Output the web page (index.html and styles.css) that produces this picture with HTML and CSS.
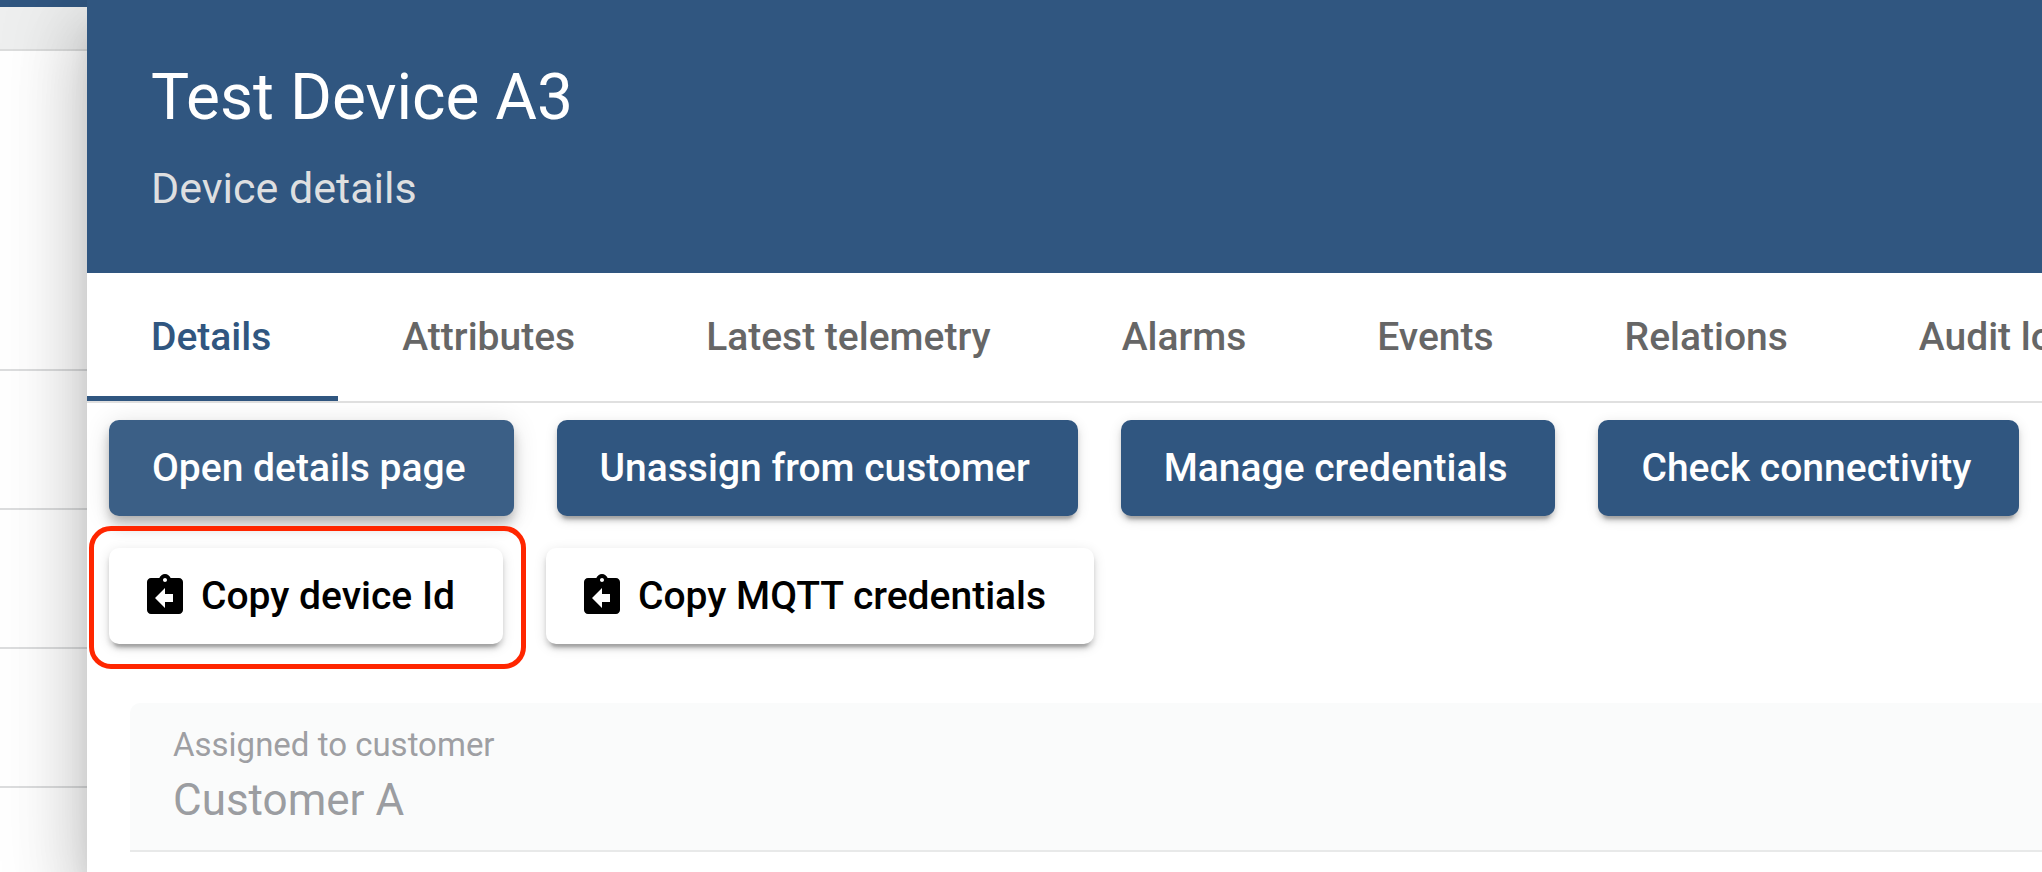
FILE: index.html
```html
<!DOCTYPE html>
<html lang="en">
<head>
<meta charset="utf-8">
<title>Test Device A3</title>
<link rel="stylesheet" href="styles.css">
</head>
<body>
<svg class="sprite" aria-hidden="true">
  <symbol id="assignment-return" viewBox="0 0 24 24">
    <path d="M19 3h-4.180C14.400 1.840 13.300 1 12 1c-1.300 0-2.400.840-2.820 2H5c-1.100 0-2 .900-2 2v14c0 1.100.900 2 2 2h14c1.100 0 2-.900 2-2V5c0-1.100-.900-2-2-2zm-7 0c.550 0 1 .450 1 1s-.450 1-1 1-1-.450-1-1 .450-1 1-1zm4 12h-4v3l-5-5 5-5v3h4v4z"/>
  </symbol>
</svg>
<div class="app">
  <aside class="backdrop">
    <div class="backdrop-bar"></div>
    <div class="backdrop-head"></div>
    <div class="backdrop-row backdrop-row-first"></div>
    <div class="backdrop-row"></div>
    <div class="backdrop-row"></div>
    <div class="backdrop-row"></div>
    <div class="backdrop-rest"></div>
  </aside>
  <main class="panel">
    <header class="panel-header">
      <h1 class="title">Test Device A3</h1>
      <p class="subtitle">Device details</p>
    </header>
    <nav class="tabs" role="tablist">
      <button class="tab tab-active" role="tab" aria-selected="true">Details</button>
      <button class="tab" role="tab">Attributes</button>
      <button class="tab" role="tab">Latest telemetry</button>
      <button class="tab" role="tab">Alarms</button>
      <button class="tab" role="tab">Events</button>
      <button class="tab" role="tab">Relations</button>
      <button class="tab" role="tab">Audit logs</button>
    </nav>
    <section class="actions">
      <div class="action-row">
        <button class="btn btn-primary btn-hovered">Open details page</button>
        <button class="btn btn-primary">Unassign from customer</button>
        <button class="btn btn-primary">Manage credentials</button>
        <button class="btn btn-primary">Check connectivity</button>
      </div>
      <div class="action-row">
        <div class="highlight">
          <button class="btn btn-icon"><svg class="icon" aria-hidden="true"><use href="#assignment-return"/></svg>Copy device Id</button>
        </div>
        <button class="btn btn-icon"><svg class="icon" aria-hidden="true"><use href="#assignment-return"/></svg>Copy MQTT credentials</button>
      </div>
    </section>
    <div class="field">
      <label class="field-label" for="customer">Assigned to customer</label>
      <input class="field-input" id="customer" type="text" value="Customer A" disabled>
    </div>
  </main>
</div>
</body>
</html>
```

FILE: styles.css
```css
* { box-sizing: border-box; }

body {
  margin: 0;
  font-family: Roboto, "Liberation Sans", sans-serif;
  background: #fff;
  overflow: hidden;
}

button, input { font: inherit; border: 0; margin: 0; }

.sprite { display: none; }

.app { display: flex; min-height: 100vh; }

.backdrop {
  flex: 0 0 87px;
  display: flex;
  flex-direction: column;
}
.backdrop-bar { height: 7px; background: #305680; }
.backdrop-head { height: 44px; background: #eeefef; border-bottom: 2px solid #dcdddd; }
.backdrop-row { height: 139px; border-bottom: 2px solid #dcddde; }
.backdrop-row-first { height: 320px; }
.backdrop-rest { flex: 1; }

.panel {
  position: relative;
  flex: 1;
  min-width: 0;
  background: #fff;
  box-shadow: 0 21px 27px -13px rgba(0, 0, 0, .2), 0 43px 64px 5px rgba(0, 0, 0, .14), 0 16px 80px 13px rgba(0, 0, 0, .12);
}

.panel-header {
  padding: 60px 64px 57px;
  background: #305680;
  color: #fff;
}
.title { margin: 0 0 24px; font-size: 64px; line-height: 76px; font-weight: 400; }
.subtitle { margin: 0; font-size: 43px; line-height: 56px; color: #dedfe0; }

.tabs {
  display: flex;
  overflow: hidden;
  border-bottom: 2px solid #e0e0e0;
}
.tab {
  flex: none;
  height: 128px;
  padding: 5px 67px 0 64px;
  border-bottom: 5px solid transparent;
  background: none;
  color: #666;
  font-size: 39px;
  font-weight: 500;
  white-space: nowrap;
}
.tab-active { color: #305680; border-bottom-color: #305680; }

.actions {
  display: flex;
  flex-direction: column;
  gap: 32px;
  padding: 17px 19px 0 22px;
}
.action-row { display: flex; gap: 43px; }

.btn {
  display: flex;
  align-items: center;
  height: 96px;
  padding: 0 48px 0 43px;
  border-radius: 10px;
  font-size: 39px;
  font-weight: 500;
  white-space: nowrap;
  box-shadow: 0 8px 3px -5px rgba(0, 0, 0, .2), 0 5px 5px 0 rgba(0, 0, 0, .14), 0 3px 13px 0 rgba(0, 0, 0, .12);
}
.btn-primary { background: #305680; color: #fff; }
.btn-hovered {
  background: #3b5f86;
  box-shadow: 0 5px 11px -3px rgba(0, 0, 0, .2), 0 11px 13px 0 rgba(0, 0, 0, .14), 0 3px 27px 0 rgba(0, 0, 0, .12);
}
.btn-icon { gap: 12px; padding-left: 32px; background: #fff; color: #000; }
.icon { width: 48px; height: 48px; fill: currentColor; }

.highlight { position: relative; }
.highlight::after {
  content: "";
  position: absolute;
  inset: -22px -23px -25px -20px;
  border: 5px solid #ff2600;
  border-radius: 22px;
  pointer-events: none;
}

.field {
  margin: 59px 0 0 43px;
  padding: 23px 43px 22px;
  background: #fafbfb;
  border-bottom: 2px solid #e8e9e9;
  border-radius: 10px 0 0 0;
}
.field-label { display: block; font-size: 33px; line-height: 38px; color: #9e9fa3; }
.field-input {
  display: block;
  width: 100%;
  height: 64px;
  padding: 8px 0 0;
  background: none;
  font-size: 44px;
  color: #9b9da1;
}
```
